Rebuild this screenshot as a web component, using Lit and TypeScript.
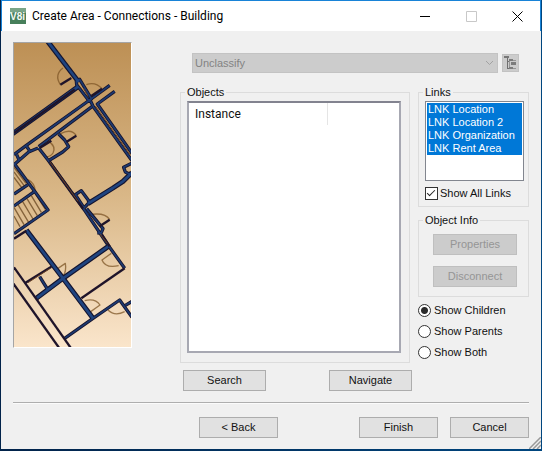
import { LitElement, html, svg, css } from "lit";
import { customElement, property, state } from "lit/decorators.js";

// Wall runs of the floor plan, thickest first.
const thickWalls = [
  "M115 5 L212 132",
  "M10 290 L210 146",
  "M55 576 L165 721 L255 841",
  "M300 626 L165 721 L85 781",
  "M240 497 L315 450 L345 430 L372 404",
];
const walls = [
  "M92 330 L120 366 L232 520 L300 621 L350 691",
  "M305 142 L245 186 L55 322 L18 350",
  "M320 160 L268 198 L372 346",
  "M205 130 L215 124 L250 182 L244 190 L206 140 Z",
  "M248 190 L256 206 L372 368",
  "M252 206 L92 326",
  "M152 288 L170 306 L182 326 L164 342 L125 366",
  "M18 380 L62 342 L90 330 M26 350 L34 368 M55 324 L66 340",
  "M18 376 L80 460 L120 516 L18 587",
  "M18 468 L60 440 M18 504 L80 460",
  "M202 470 L220 458 L245 492 L228 510 Z",
  "M236 512 L285 572 L280 584 L268 585",
  "M372 375 L347 388 L352 402 L368 410",
  "M170 901 L255 841 L335 786 L372 838 M352 802 L372 790",
  "M95 716 L120 756",
];
const darkWalls = [
  "M350 691 L220 781",
  "M18 688 L190 932",
  "M12 731 L155 932",
  "M50 736 L130 686",
  "M125 370 L225 512",
  "M282 590 L305 625",
  "M18 285 L200 154",
  "M157 140 L190 120",
  "M282 152 L250 174",
  "M205 293 L175 312",
  "M130 308 L95 330",
  "M305 545 L275 565",
  "M18 602 L55 578",
];
// Brown slots inside the hollow walls.
const slots = ["M226 150 L240 174", "M262 204 L368 352", "M126 372 L210 490", "M60 734 L125 692", "M276 588 L298 616"];
const doors = [
  "M165 90 Q138 110 157 140",
  "M235 140 Q262 130 282 152",
  "M158 287 Q190 270 205 293",
  "M240 531 Q290 521 305 545",
  "M122 310 Q145 325 135 345 Q128 356 115 356",
  "M60 425 Q80 435 82 460",
  "M150 691 L172 676 Q176 700 165 715",
  "M310 646 L282 666 Q292 692 332 683",
  "M230 788 Q262 780 276 801 L245 823",
  "M300 816 Q320 836 350 821",
];
const stairs = [
  "M18 388 L54 436 M18 402 L50 445 M18 418 L42 450",
  "M30 500 L62 553 M44 491 L75 543 M57 482 L88 533 M70 473 L100 523 M18 508 L48 560 M84 470 L112 514 M18 534 L36 566",
];

@customElement("floor-plan")
export class FloorPlan extends LitElement {
  static styles = css`
    :host { display: block; border: 1px solid #a5a5a5; border-right-color: #fff; border-bottom-color: #fff; }
    svg { display: block; width: 100%; height: auto; }
    path { fill: none; stroke-linejoin: round; }
    .door { stroke: #7d5527; stroke-width: 4; opacity: 0.75; }
    .stair { stroke: #6e4c25; stroke-width: 4; opacity: 0.8; }
    .edge { stroke: #17142c; stroke-width: 10; }
    .fill { stroke: #1d3a72; stroke-width: 5; }
    .thick-edge { stroke: #14142f; stroke-width: 15; }
    .thick-fill { stroke: #1f4480; stroke-width: 8; }
    .dark { stroke: #1f142a; stroke-width: 7; }
    .slot { stroke: #6b4428; stroke-width: 3; }
  `;
  render() {
    const draw = (name: string, runs: string[]) => runs.map((d) => svg`<path class=${name} d=${d}></path>`);
    return html`<svg viewBox="18 15 351 912" role="img" aria-label="Floor plan">
      <defs>
        <linearGradient id="paper" x1="0" y1="0" x2="0" y2="1">
          <stop offset="0" stop-color="#bd9055"></stop>
          <stop offset="0.5" stop-color="#d9b787"></stop>
          <stop offset="1" stop-color="#fae5cb"></stop>
        </linearGradient>
      </defs>
      <rect x="18" y="15" width="351" height="912" fill="url(#paper)"></rect>
      ${draw("door", doors)} ${draw("stair", stairs)}
      ${draw("edge", walls)} ${draw("thick-edge", thickWalls)}
      ${draw("fill", walls)} ${draw("thick-fill", thickWalls)}
      ${draw("dark", darkWalls)} ${draw("slot", slots)}
    </svg>`;
  }
}

@customElement("group-box")
export class GroupBox extends LitElement {
  @property() label = "";
  static styles = css`
    :host { display: flex; }
    fieldset {
      flex: 1; min-width: 0; margin: 0; padding: 2px 6px 6px; border: 1px solid #dcdcdc;
      display: flex; flex-direction: column; box-sizing: border-box;
    }
    legend { padding: 0 2px; line-height: 13px; margin-left: -2px; }
  `;
  render() {
    return html`<fieldset><legend>${this.label}</legend><slot></slot></fieldset>`;
  }
}

@customElement("app-root")
export class AppRoot extends LitElement {
  @state() private links = ["LNK Location", "LNK Location 2", "LNK Organization", "LNK Rent Area"];
  @state() private modes = ["Show Children", "Show Parents", "Show Both"];

  static styles = css`
    :host {
      display: flex; box-sizing: border-box; min-height: 100vh; padding: 0 1px 2px;
      background: linear-gradient(90deg, #02234a, #00467f);
      font: 11px/13px "Liberation Sans", Arial, sans-serif; color: #111;
    }
    .window { flex: 1; min-width: 0; display: flex; flex-direction: column; background: #f0f0f0; position: relative; }
    .titlebar {
      display: flex; align-items: center; height: 30px; background: #fff;
      border: solid #1883d7; border-width: 1px 1px 0; padding-left: 8px;
    }
    .logo { width: 16px; height: 16px; margin-right: 6px; }
    .logo text { font: bold 10px "Liberation Sans", sans-serif; fill: #f4faf4; }
    h1 { flex: 1; margin: 0; font: 12px/16px Roboto, "Open Sans", sans-serif; color: #000; }
    .caption { width: 46px; height: 30px; padding: 0; border: 0; background: none; display: grid; place-items: center; }
    .caption svg { width: 11px; height: 11px; fill: none; stroke: #000; }
    .caption .off { stroke: #c8c8c8; }
    .body { flex: 1; display: flex; flex-direction: column; padding: 11px 12px 11px 12px; }
    .content { flex: 1; display: flex; align-items: flex-start; gap: 48px; }
    floor-plan { width: 117px; flex: none; }
    .panel { flex: 1; min-width: 0; align-self: stretch; padding-top: 11px; display: flex; flex-direction: column; gap: 13px; }
    .classify { display: flex; align-items: center; gap: 4px; padding: 0 10px 0 12px; }
    .combo { flex: 1; position: relative; display: flex; }
    .combo select {
      appearance: none; flex: 1; height: 20px; margin: 0; padding: 0 2px; font: inherit; color: #838383;
      background: #ccc; border: 1px solid #c3c3c3; border-radius: 0; opacity: 1;
    }
    .combo svg { position: absolute; right: 4px; top: 7px; width: 9px; height: 6px; fill: none; stroke: #a2a2a2; }
    .tree { width: 17px; height: 18px; padding: 0; border: 1px solid #c2c2c2; background: #ccc; display: grid; place-items: center; }
    .tree svg { width: 13px; height: 14px; }
    .columns { flex: 1; display: flex; gap: 8px; }
    .objects { flex: 1; min-width: 0; display: flex; flex-direction: column; gap: 7px; }
    .objects group-box { flex: 1; }
    .list { flex: 1; margin: 0 2px 3px 0; background: #fff; border: 2px solid #a7a8b2; border-top-color: #82838f; }
    table { border-collapse: collapse; width: 100%; table-layout: fixed; }
    th { height: 22px; padding: 0 0 0 6px; text-align: left; font: 12px/16px Roboto, "Open Sans", sans-serif; }
    th:first-child { width: 66%; box-sizing: border-box; border-right: 1px solid #e5e5e5; }
    .actions { display: flex; justify-content: space-between; padding-left: 3px; margin-right: -2px; }
    .push {
      font: inherit; color: #111; height: 21px; width: 79px; padding: 0; border: 1px solid #adadad; border-radius: 0;
      background: #e1e1e1;
    }
    .push:disabled { color: #959595; background: #ccc; border-color: #bfbfbf; }
    .actions .push { width: 83px; }
    .side { width: 111px; flex: none; display: flex; flex-direction: column; gap: 7px; }
    .links {
      width: 99px; height: 80px; margin: 0; padding: 1px; font: inherit; border: 1px solid #82868f; border-radius: 0;
      background: #fff; overflow: hidden; outline: 0; box-sizing: border-box;
    }
    .links option { padding: 0 1px; min-height: 13px; line-height: 13px; height: 13px; }
    .links option:checked { background: #0078d7 linear-gradient(#0078d7, #0078d7); color: #fff !important; }
    .all { display: flex; align-items: center; gap: 2px; margin: 6px 0 0; white-space: nowrap; }
    input { appearance: none; width: 13px; height: 13px; flex: none; margin: 0; border: 1px solid #333; background: #fff; }
    .all input:checked::after {
      content: ""; display: block; width: 7px; height: 3px; margin: 2px 0 0 1px;
      border: solid #222; border-width: 0 0 1px 1px; transform: rotate(-45deg);
    }
    input[type="radio"] { border-radius: 50%; }
    input[type="radio"]:checked { background: radial-gradient(circle, #2b2b2b 3px, #fff 4px); }
    .info { display: flex; flex-direction: column; gap: 11px; padding: 5px 5px 3px 8px; }
    .info .push { width: 100%; }
    .modes { display: flex; flex-direction: column; gap: 8px; }
    .modes label { display: flex; align-items: center; gap: 3px; white-space: nowrap; }
    footer { display: flex; justify-content: flex-end; margin-top: 11px; padding-top: 14px; border-top: 1px solid #aeaeae; box-shadow: inset 0 1px #fbfbfb; }
    .finish { margin: 0 12px 0 81px; }
    .grip { position: absolute; right: 0; bottom: 0; width: 12px; height: 12px; stroke: #999; stroke-width: 1.5; }
  `;

  render() {
    return html`<div class="window">
      <header class="titlebar">
        <svg class="logo" viewBox="0 0 16 16" aria-hidden="true">
          <rect width="16" height="16" fill="#477f5b"></rect>
          <path d="M0 0H16V5Q8 2 0 6Z" fill="#79a588"></path>
          <text x="0" y="12">V8i</text>
        </svg>
        <h1>Create Area - Connections - Building</h1>
        <button class="caption" aria-label="Minimize"><svg viewBox="0 0 11 11"><path d="M0 5.5H10"></path></svg></button>
        <button class="caption" aria-label="Maximize" disabled><svg viewBox="0 0 11 11"><path class="off" d="M.5.5H10.5V10.5H.5Z"></path></svg></button>
        <button class="caption" aria-label="Close"><svg viewBox="0 0 11 11"><path d="M.5.5L10.5 10.5M10.5.5L.5 10.5"></path></svg></button>
      </header>
      <main class="body">
        <div class="content">
          <floor-plan></floor-plan>
          <section class="panel">
            <div class="classify">
              <div class="combo">
                <select aria-label="Classification" disabled><option>Unclassify</option></select>
                <svg viewBox="0 0 9 6"><path d="M1 1L4.5 4.5L8 1"></path></svg>
              </div>
              <button class="tree" aria-label="Browse tree" disabled>
                <svg viewBox="0 0 13 14" shape-rendering="crispEdges">
                  <path d="M1 1H5M3.5 2V12.5H6M3.5 5.5H6" fill="none" stroke="#707070"></path>
                  <path d="M0 0H5V2H0Z" fill="#777"></path>
                  <path d="M5 3H9V5H5ZM7 6H12V9H7ZM5 11H9V13H5Z" fill="#7c7c7c"></path>
                  <path d="M9 4.5H12M9 12.5H12M5.5 5V11" stroke="#969696" fill="none"></path>
                </svg>
              </button>
            </div>
            <div class="columns">
              <div class="objects">
                <group-box label="Objects">
                  <div class="list"><table><thead><tr><th scope="col">Instance</th><th></th></tr></thead></table></div>
                </group-box>
                <div class="actions"><button class="push">Search</button><button class="push">Navigate</button></div>
              </div>
              <div class="side">
                <group-box label="Links">
                  <select class="links" multiple aria-label="Links">${this.links.map((l) => html`<option selected>${l}</option>`)}</select>
                  <label class="all"><input type="checkbox" checked />Show All Links</label>
                </group-box>
                <group-box label="Object Info">
                  <div class="info"><button class="push" disabled>Properties</button><button class="push" disabled>Disconnect</button></div>
                </group-box>
                <div class="modes">
                  ${this.modes.map((m, i) => html`<label><input type="radio" name="mode" ?checked=${i === 0} />${m}</label>`)}
                </div>
              </div>
            </div>
          </section>
        </div>
        <footer>
          <button class="push">&lt; Back</button>
          <button class="push finish">Finish</button>
          <button class="push">Cancel</button>
        </footer>
      </main>
      <svg class="grip" viewBox="0 0 12 12" aria-hidden="true"><path d="M0 12L12 0M4 12L12 4M8 12L12 8"></path></svg>
    </div>`;
  }
}
